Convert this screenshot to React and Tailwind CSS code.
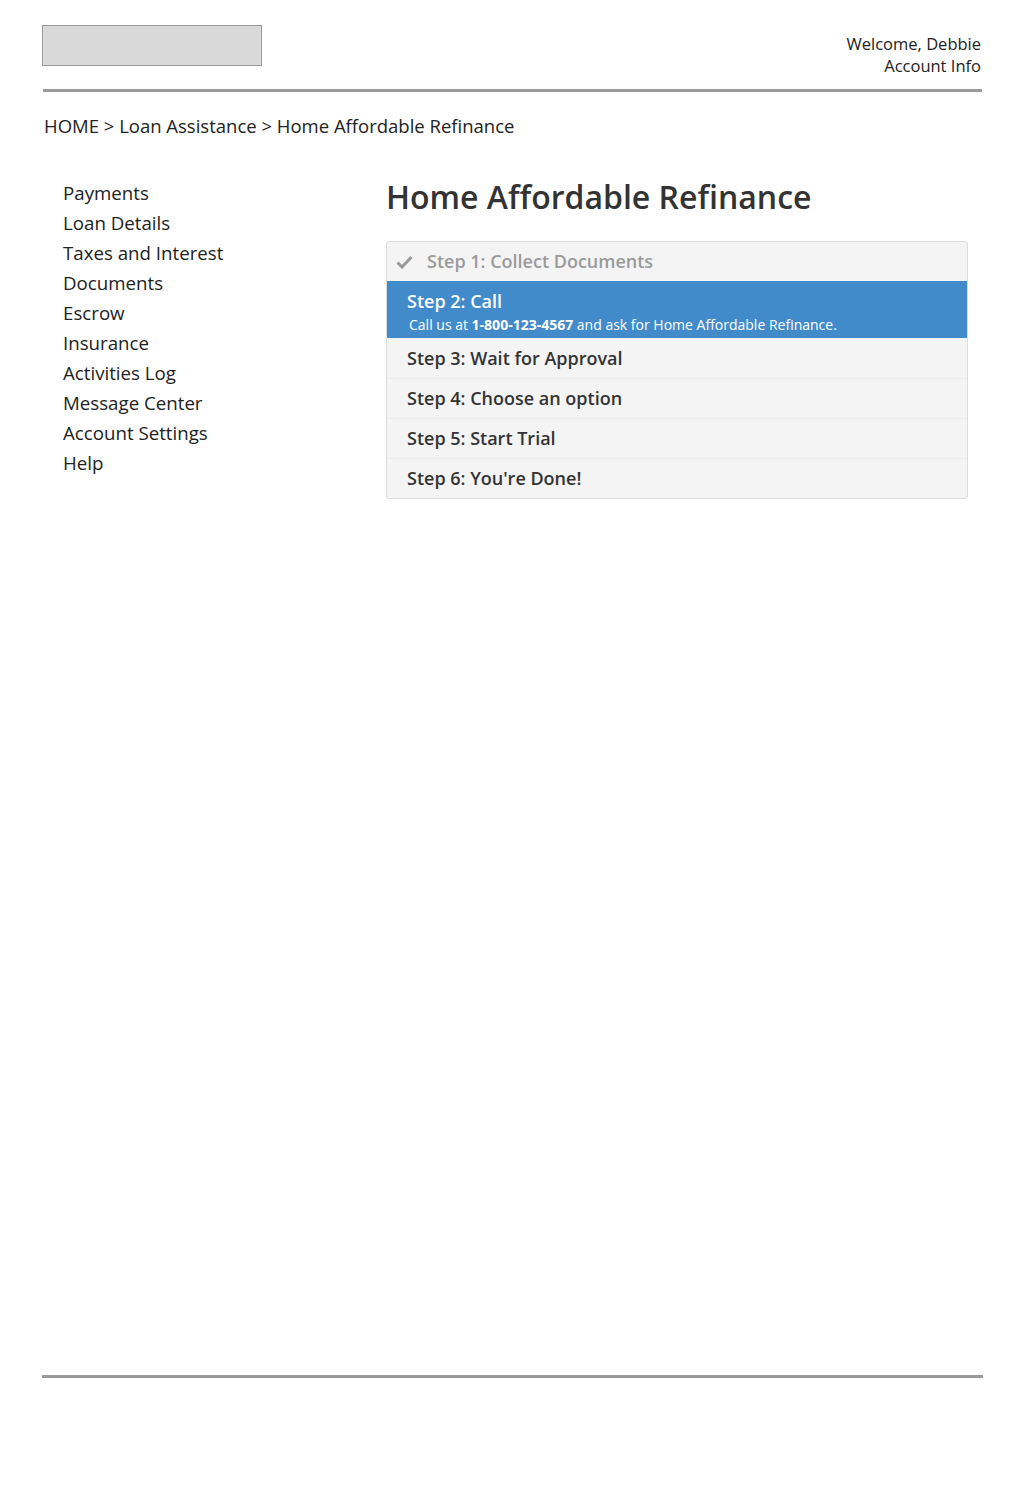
const NAV = [
  "Payments",
  "Loan Details",
  "Taxes and Interest",
  "Documents",
  "Escrow",
  "Insurance",
  "Activities Log",
  "Message Center",
  "Account Settings",
  "Help",
];

const LATER_STEPS = [
  "Step 3: Wait for Approval",
  "Step 4: Choose an option",
  "Step 5: Start Trial",
  "Step 6: You're Done!",
];

function Check() {
  return (
    <svg width="17" height="14" viewBox="0 0 17 14" className="shrink-0">
      <path
        d="M1.5 7.5 L6 12 L15.5 2"
        fill="none"
        stroke="#9a9a9a"
        strokeWidth="3"
        strokeLinejoin="miter"
      />
    </svg>
  );
}

export default function App() {
  return (
    <div
      className="min-h-[1500px] bg-white text-[#333]"
      style={{ fontFamily: '"Open Sans", "Liberation Sans", sans-serif' }}
    >
      <div className="w-[941px] ml-[42px] pt-[25px]">
        <header className="flex justify-between items-start h-[64px]">
          <div className="w-[220px] h-[41px] bg-[#d9d9d9] border border-[#9a9a9a]" />
          <div className="text-right text-[16.5px] leading-[22px] text-[#222] pt-[8px] mr-[2px]">
            <div>Welcome, Debbie</div>
            <div>Account Info</div>
          </div>
        </header>
        <div className="h-[3px] bg-[#9a9a9a] w-[939px] ml-px" />

        <nav className="text-[18.5px] leading-[24px] text-[#222] mt-[22px] ml-[2px]">
          HOME &gt; Loan Assistance &gt; Home Affordable Refinance
        </nav>

        <div className="flex mt-[40px]">
          <ul className="w-[344px] pl-[21px] text-[18.7px] leading-[30px] text-[#222]">
            {NAV.map((item) => (
              <li key={item}>{item}</li>
            ))}
          </ul>

          <main className="w-[582px]">
            <h1 className="text-[32px] leading-[40px] font-semibold text-[#333] -mt-[1px]">
              Home Affordable Refinance
            </h1>

            <div className="mt-[24px] border border-[#dcdcdc] rounded-[3px] bg-[#f4f4f4] overflow-hidden">
              <div className="h-[39px] flex items-center gap-[14px] pl-[9px] text-[18px] font-semibold text-[#9a9a9a]">
                <Check />
                <span>Step 1: Collect Documents</span>
              </div>
              <div className="h-[57px] bg-[#428bca] text-white pl-[20px] pt-[8px]">
                <div className="text-[18px] leading-[24px] font-semibold">Step 2: Call</div>
                <div className="text-[14px] leading-[20px] pl-[2px] mt-[2px]">
                  Call us at <b className="font-bold">1-800-123-4567</b> and ask for Home
                  Affordable Refinance.
                </div>
              </div>
              {LATER_STEPS.map((step, i) => (
                <div
                  key={step}
                  className={
                    "h-[40px] flex items-center pl-[20px] text-[18px] font-semibold text-[#333]" +
                    (i > 0 ? " border-t border-[#ececec]" : "")
                  }
                >
                  {step}
                </div>
              ))}
            </div>
          </main>
        </div>
      </div>

      <div className="absolute top-[1375px] left-[42px] w-[941px] h-[3px] bg-[#9a9a9a]" />
    </div>
  );
}
